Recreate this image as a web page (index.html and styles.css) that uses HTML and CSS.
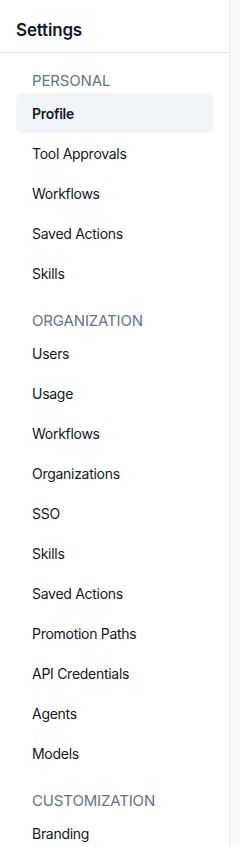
FILE: index.html
```html
<!DOCTYPE html>
<html lang="en">
<head>
    <meta charset="UTF-8">
    <meta name="viewport" content="width=device-width, initial-scale=1.0">
    <title>Settings</title>
    <link rel="stylesheet" href="styles.css">
</head>
<body>
    <div class="layout">
        <aside class="sidebar">
            <div class="sidebar-header">Settings</div>

            <!-- personal -->
            <div class="section-label">Personal</div>
            <a class="nav-item active" href="#">Profile</a>
            <a class="nav-item" href="#">Tool Approvals</a>
            <a class="nav-item" href="#">Workflows</a>
            <a class="nav-item" href="#">Saved Actions</a>
            <a class="nav-item" href="#">Skills</a>

            <!-- organization -->
            <div class="section-label">Organization</div>
            <a class="nav-item" href="#">Users</a>
            <a class="nav-item" href="#">Usage</a>
            <a class="nav-item" href="#">Workflows</a>
            <a class="nav-item" href="#">Organizations</a>
            <a class="nav-item" href="#">SSO</a>
            <a class="nav-item" href="#">Skills</a>
            <a class="nav-item" href="#">Saved Actions</a>
            <a class="nav-item" href="#">Promotion Paths</a>
            <a class="nav-item" href="#">API Credentials</a>
            <a class="nav-item" href="#">Agents</a>
            <a class="nav-item" href="#">Models</a>

            <!-- customization -->
            <div class="section-label">Customization</div>
            <a class="nav-item" href="#">Branding</a>
        </aside>
        <main class="content"></main>
    </div>
</body>
</html>
```

FILE: styles.css
```css
body {
    margin: 0;
    font-family: Inter, "Noto Sans", sans-serif;
    color: #0f172a;
    background: #f8f9fb;
}

.layout {
    display: flex;
    height: 847px;
    overflow: hidden;
}

.sidebar {
    width: 229px;
    flex-shrink: 0;
    background: #fff;
    border-right: 1px solid #e6e8ec;
    display: flex;
    flex-direction: column;
}

.sidebar > * {
    flex-shrink: 0;
}

.sidebar-header {
    height: 53px;
    box-sizing: border-box;
    padding: 8px 16px 0;
    display: flex;
    align-items: center;
    font-size: 17px;
    font-weight: 600;
    letter-spacing: -0.01em;
    border-bottom: 1px solid #e2e6ef;
}

.section-label {
    padding: 18px 32px 2px;
    line-height: 20px;
    font-size: 15px;
    letter-spacing: -0.01em;
    color: #64748b;
    text-transform: uppercase;
}

.nav-item {
    display: flex;
    align-items: center;
    height: 40px;
    margin: 0 16px;
    padding: 0 16px;
    border-radius: 7px;
    font-size: 14px;
    letter-spacing: -0.02em;
    color: #111827;
    text-decoration: none;
}

.nav-item.active {
    background: #f1f4f8;
    font-weight: 600;
}

.content {
    flex: 1;
}
```
